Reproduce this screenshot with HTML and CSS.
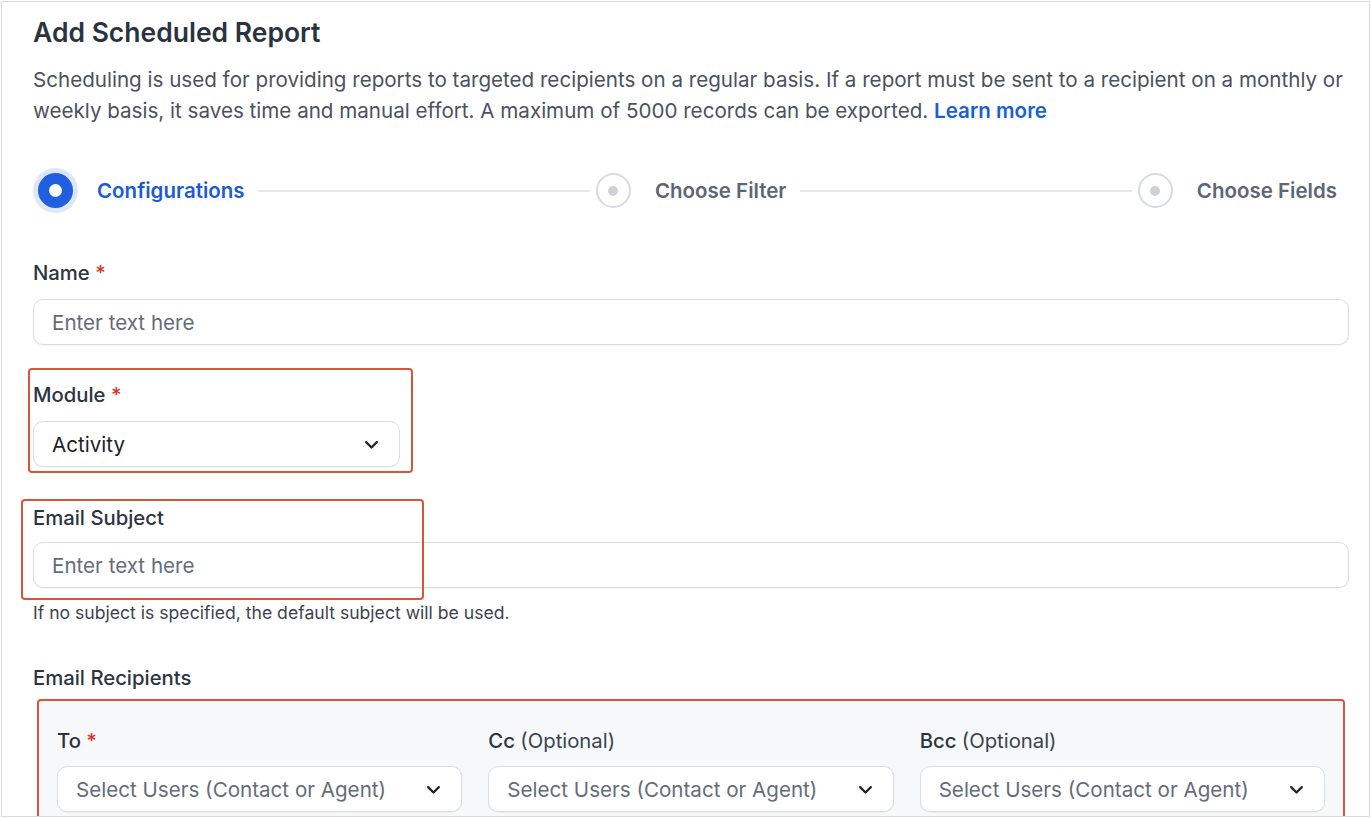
FILE: index.html
```html
<!DOCTYPE html>
<html lang="en">
<head>
<meta charset="utf-8">
<title>Add Scheduled Report</title>
<link rel="stylesheet" href="styles.css">
</head>
<body>
<div class="frame">
  <h1 class="title">Add Scheduled Report</h1>
  <p class="desc">Scheduling is used for providing reports to targeted recipients on a regular basis. If a report must be sent to a recipient on a monthly or weekly basis, it saves time and manual effort. A maximum of 5000 records can be exported. <a class="link" href="#">Learn more</a></p>

  <div class="stepper">
    <div class="step active">
      <span class="step-icon"><span class="dot-active"></span></span>
      <span class="step-label">Configurations</span>
    </div>
    <div class="connector"></div>
    <div class="step">
      <span class="step-icon"><span class="dot-idle"></span></span>
      <span class="step-label">Choose Filter</span>
    </div>
    <div class="connector"></div>
    <div class="step">
      <span class="step-icon"><span class="dot-idle"></span></span>
      <span class="step-label">Choose Fields</span>
    </div>
  </div>

  <div class="field field-name">
    <label class="label">Name <span class="req">*</span></label>
    <div class="input"><span class="placeholder">Enter text here</span></div>
  </div>

  <div class="field field-module">
    <span class="annot annot-module"></span>
    <label class="label">Module <span class="req">*</span></label>
    <div class="input select select-module"><span class="value">Activity</span>
      <svg class="chev" viewBox="0 0 16 16"><path d="M3.5 6l4.5 4.5L12.5 6"/></svg>
    </div>
  </div>

  <div class="field field-subject">
    <span class="annot annot-subject"></span>
    <label class="label label-tight">Email Subject</label>
    <div class="input"><span class="placeholder">Enter text here</span></div>
    <p class="help">If no subject is specified, the default subject will be used.</p>
  </div>

  <div class="recipients">
    <div class="label rec-title">Email Recipients</div>
    <div class="rec-panel">
      <div class="rec-col">
        <label class="label">To <span class="req">*</span></label>
        <div class="input select"><span class="placeholder">Select Users (Contact or Agent)</span>
          <svg class="chev" viewBox="0 0 16 16"><path d="M3.5 6l4.5 4.5L12.5 6"/></svg>
        </div>
      </div>
      <div class="rec-col">
        <label class="label">Cc <span class="opt">(Optional)</span></label>
        <div class="input select"><span class="placeholder">Select Users (Contact or Agent)</span>
          <svg class="chev" viewBox="0 0 16 16"><path d="M3.5 6l4.5 4.5L12.5 6"/></svg>
        </div>
      </div>
      <div class="rec-col">
        <label class="label">Bcc <span class="opt">(Optional)</span></label>
        <div class="input select"><span class="placeholder">Select Users (Contact or Agent)</span>
          <svg class="chev" viewBox="0 0 16 16"><path d="M3.5 6l4.5 4.5L12.5 6"/></svg>
        </div>
      </div>
    </div>
  </div>
</div>
</body>
</html>
```

FILE: styles.css
```css
* { box-sizing: border-box; }
html, body { margin: 0; padding: 0; background: #ffffff; }
body {
  font-family: Inter, "Noto Sans", "Liberation Sans", sans-serif;
  color: #2b3441;
}
.frame {
  margin: 1px 1px 1px 1px;
  height: 816px;
  border: 1px solid #d9d9d9;
  overflow: hidden;
  padding: 14px 20px 0 31px;
}
.title {
  margin: 0;
  font-size: 26.5px;
  line-height: 32px;
  font-weight: 600;
  color: #2a3340;
}
.desc {
  margin: 16px 0 0;
  font-size: 20.6px;
  line-height: 31px;
  color: #4a5261;
}
.link {
  color: #1b5fd3;
  font-weight: 600;
  text-decoration: none;
}

/* stepper */
.stepper {
  display: flex;
  align-items: center;
  margin-top: 42px;
  padding-right: 12px;
  height: 45px;
}
.step {
  display: flex;
  align-items: center;
  gap: 19px;
}
.step-icon {
  width: 45px;
  height: 45px;
  display: flex;
  align-items: center;
  justify-content: center;
  border-radius: 50%;
}
.step.active .step-icon { background: #dde6fa; }
.dot-active {
  width: 35px;
  height: 35px;
  border-radius: 50%;
  background: #1f5fe0;
  display: flex;
  align-items: center;
  justify-content: center;
}
.dot-active::after {
  content: "";
  width: 13px;
  height: 13px;
  border-radius: 50%;
  background: #ffffff;
}
.dot-idle {
  width: 35px;
  height: 35px;
  border-radius: 50%;
  border: 2px solid #d7dbe1;
  display: flex;
  align-items: center;
  justify-content: center;
}
.dot-idle::after {
  content: "";
  width: 10px;
  height: 10px;
  border-radius: 50%;
  background: #cdd2da;
}
.step-label {
  font-size: 20.5px;
  font-weight: 600;
  color: #5d6676;
  white-space: nowrap;
}
.step.active .step-label { color: #1d5bd6; }
.connector {
  flex: 1;
  height: 2px;
  background: #e5e7eb;
  margin: 0 1px 0 13px;
}

/* fields */
.field { position: relative; }
.field-name { margin-top: 48px; }
.field-module { margin-top: 38px; }
.field-subject { margin-top: 39px; }
.label {
  display: block;
  font-size: 20.3px;
  line-height: 24px;
  font-weight: 500;
  color: #2b3441;
  margin-bottom: 14px;
}
.label-tight { margin-bottom: 12px; }
.req { color: #d9352b; font-weight: 500; }
.opt { font-weight: 400; color: #3a4350; }
.input {
  position: relative;
  height: 46px;
  border: 1px solid #d9dde2;
  border-radius: 10px;
  background: #ffffff;
  display: flex;
  align-items: center;
  padding: 0 18px;
  font-size: 20.6px;
  box-shadow: 0 1px 1px rgba(16, 24, 40, 0.04);
}
.placeholder { color: #646c79; white-space: nowrap; }
.value { color: #1b1f27; }
.select { justify-content: space-between; }
.select-module { width: 367px; }
.chev {
  width: 19px;
  height: 19px;
  fill: none;
  stroke: #1f2530;
  stroke-width: 1.9;
  stroke-linecap: round;
  stroke-linejoin: round;
  flex: none;
}
.help {
  margin: 15px 0 0;
  font-size: 17.6px;
  line-height: 20px;
  color: #3b4350;
}

/* annotation boxes */
.annot {
  position: absolute;
  border: 2px solid #d8553a;
  border-radius: 4px;
  pointer-events: none;
  z-index: 2;
}
.annot-module { top: -15px; left: -5px; width: 385px; height: 105px; }
.annot-subject { top: -7px; left: -12px; width: 403px; height: 101px; }

/* recipients */
.recipients { margin-top: 43px; }
.rec-title { margin-bottom: 9px; }
.rec-panel {
  margin-left: 4px;
  margin-right: 4px;
  border: 2px solid #d8553a;
  border-radius: 4px;
  background: #f7f8fa;
  padding: 28px 18px 20px;
  display: grid;
  grid-template-columns: 1fr 1fr 1fr;
  column-gap: 26px;
}
.rec-col .label { margin-bottom: 13px; }
.rec-col .input { padding-right: 18px; }
```
